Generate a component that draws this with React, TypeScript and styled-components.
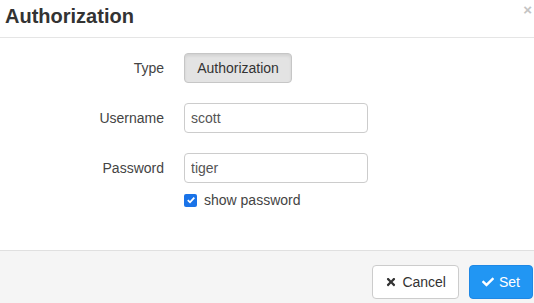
import React from "react";
import styled, { createGlobalStyle } from "styled-components";
import { FaTimes, FaCheck } from "react-icons/fa";

const Global = createGlobalStyle`
  html, body { margin: 0; padding: 0; background: #fff; }
  body { font-family: "Liberation Sans", Arial, sans-serif; font-size: 14px; color: #333; }
  * { box-sizing: border-box; }
`;

const Dialog = styled.div`
  width: 534px;
  height: 303px;
  display: flex;
  flex-direction: column;
  background: #fff;
  overflow: hidden;
`;

const Header = styled.div`
  position: relative;
  height: 38px;
  padding: 0 5px;
  display: flex;
  align-items: center;
  border-bottom: 1px solid #e5e5e5;
`;

const Title = styled.h4`
  margin: 0;
  margin-top: -4px;
  font-size: 20px;
  font-weight: bold;
  color: #333;
`;

const Close = styled.span`
  position: absolute;
  right: 2px;
  top: 2px;
  font-size: 15px;
  font-weight: bold;
  color: #c4c4c4;
  line-height: 16px;
`;

const Body = styled.div`
  flex: 1;
  padding-top: 15px;
`;

const Form = styled.div`
  display: grid;
  grid-template-columns: 164px 184px;
  column-gap: 20px;
  row-gap: 20px;
  align-items: center;
`;

const Label = styled.label`
  text-align: right;
  color: #444;
  font-size: 14px;
`;

const TypeButton = styled.button`
  justify-self: start;
  height: 30px;
  width: 108px;
  padding: 0 12px;
  font-family: inherit;
  font-size: 14px;
  color: #333;
  background: #e3e3e3;
  border: 1px solid #c6c6c6;
  border-radius: 4px;
  box-shadow: inset 0 2px 3px rgba(0, 0, 0, 0.08);
`;

const Input = styled.input`
  height: 30px;
  width: 184px;
  padding: 0 6px;
  font-family: inherit;
  font-size: 14px;
  color: #555;
  border: 1px solid #ccc;
  border-radius: 4px;
  outline: none;
`;

const CheckRow = styled.label`
  grid-column: 2;
  margin-top: -11px;
  display: flex;
  align-items: center;
  gap: 7px;
  color: #444;
  font-size: 14px;
  white-space: nowrap;
`;

const Check = styled.span`
  width: 13px;
  height: 13px;
  border-radius: 2px;
  background: #1a73e8;
  display: flex;
  align-items: center;
  justify-content: center;
`;

const Footer = styled.div`
  height: 53px;
  border-top: 1px solid #e0e0e0;
  background: #f5f5f5;
  display: flex;
  justify-content: flex-end;
  align-items: flex-start;
  gap: 10px;
  padding: 14px 1px 0 0;
`;

const Btn = styled.button<{ $primary?: boolean }>`
  height: 34px;
  padding: 0 12px;
  display: flex;
  align-items: center;
  gap: 5px;
  font-family: inherit;
  font-size: 14px;
  border-radius: 4px;
  color: ${(p) => (p.$primary ? "#fff" : "#333")};
  background: ${(p) => (p.$primary ? "#2196f3" : "#fff")};
  border: 1px solid ${(p) => (p.$primary ? "#1e88e5" : "#ccc")};
  svg { font-size: 12px; }
`;

export default function App() {
  return (
    <>
      <Global />
      <Dialog>
        <Header>
          <Title>Authorization</Title>
          <Close>×</Close>
        </Header>
        <Body>
          <Form>
            <Label>Type</Label>
            <TypeButton>Authorization</TypeButton>
            <Label>Username</Label>
            <Input defaultValue="scott" />
            <Label>Password</Label>
            <Input defaultValue="tiger" />
            <CheckRow>
              <Check>
                <svg width="10" height="10" viewBox="0 0 10 10">
                  <path d="M1.8 5.2 L4 7.3 L8.3 2.6" stroke="#fff" strokeWidth="1.8" fill="none" />
                </svg>
              </Check>
              show password
            </CheckRow>
          </Form>
        </Body>
        <Footer>
          <Btn>
            <FaTimes />
            Cancel
          </Btn>
          <Btn $primary>
            <FaCheck />
            Set
          </Btn>
        </Footer>
      </Dialog>
    </>
  );
}
